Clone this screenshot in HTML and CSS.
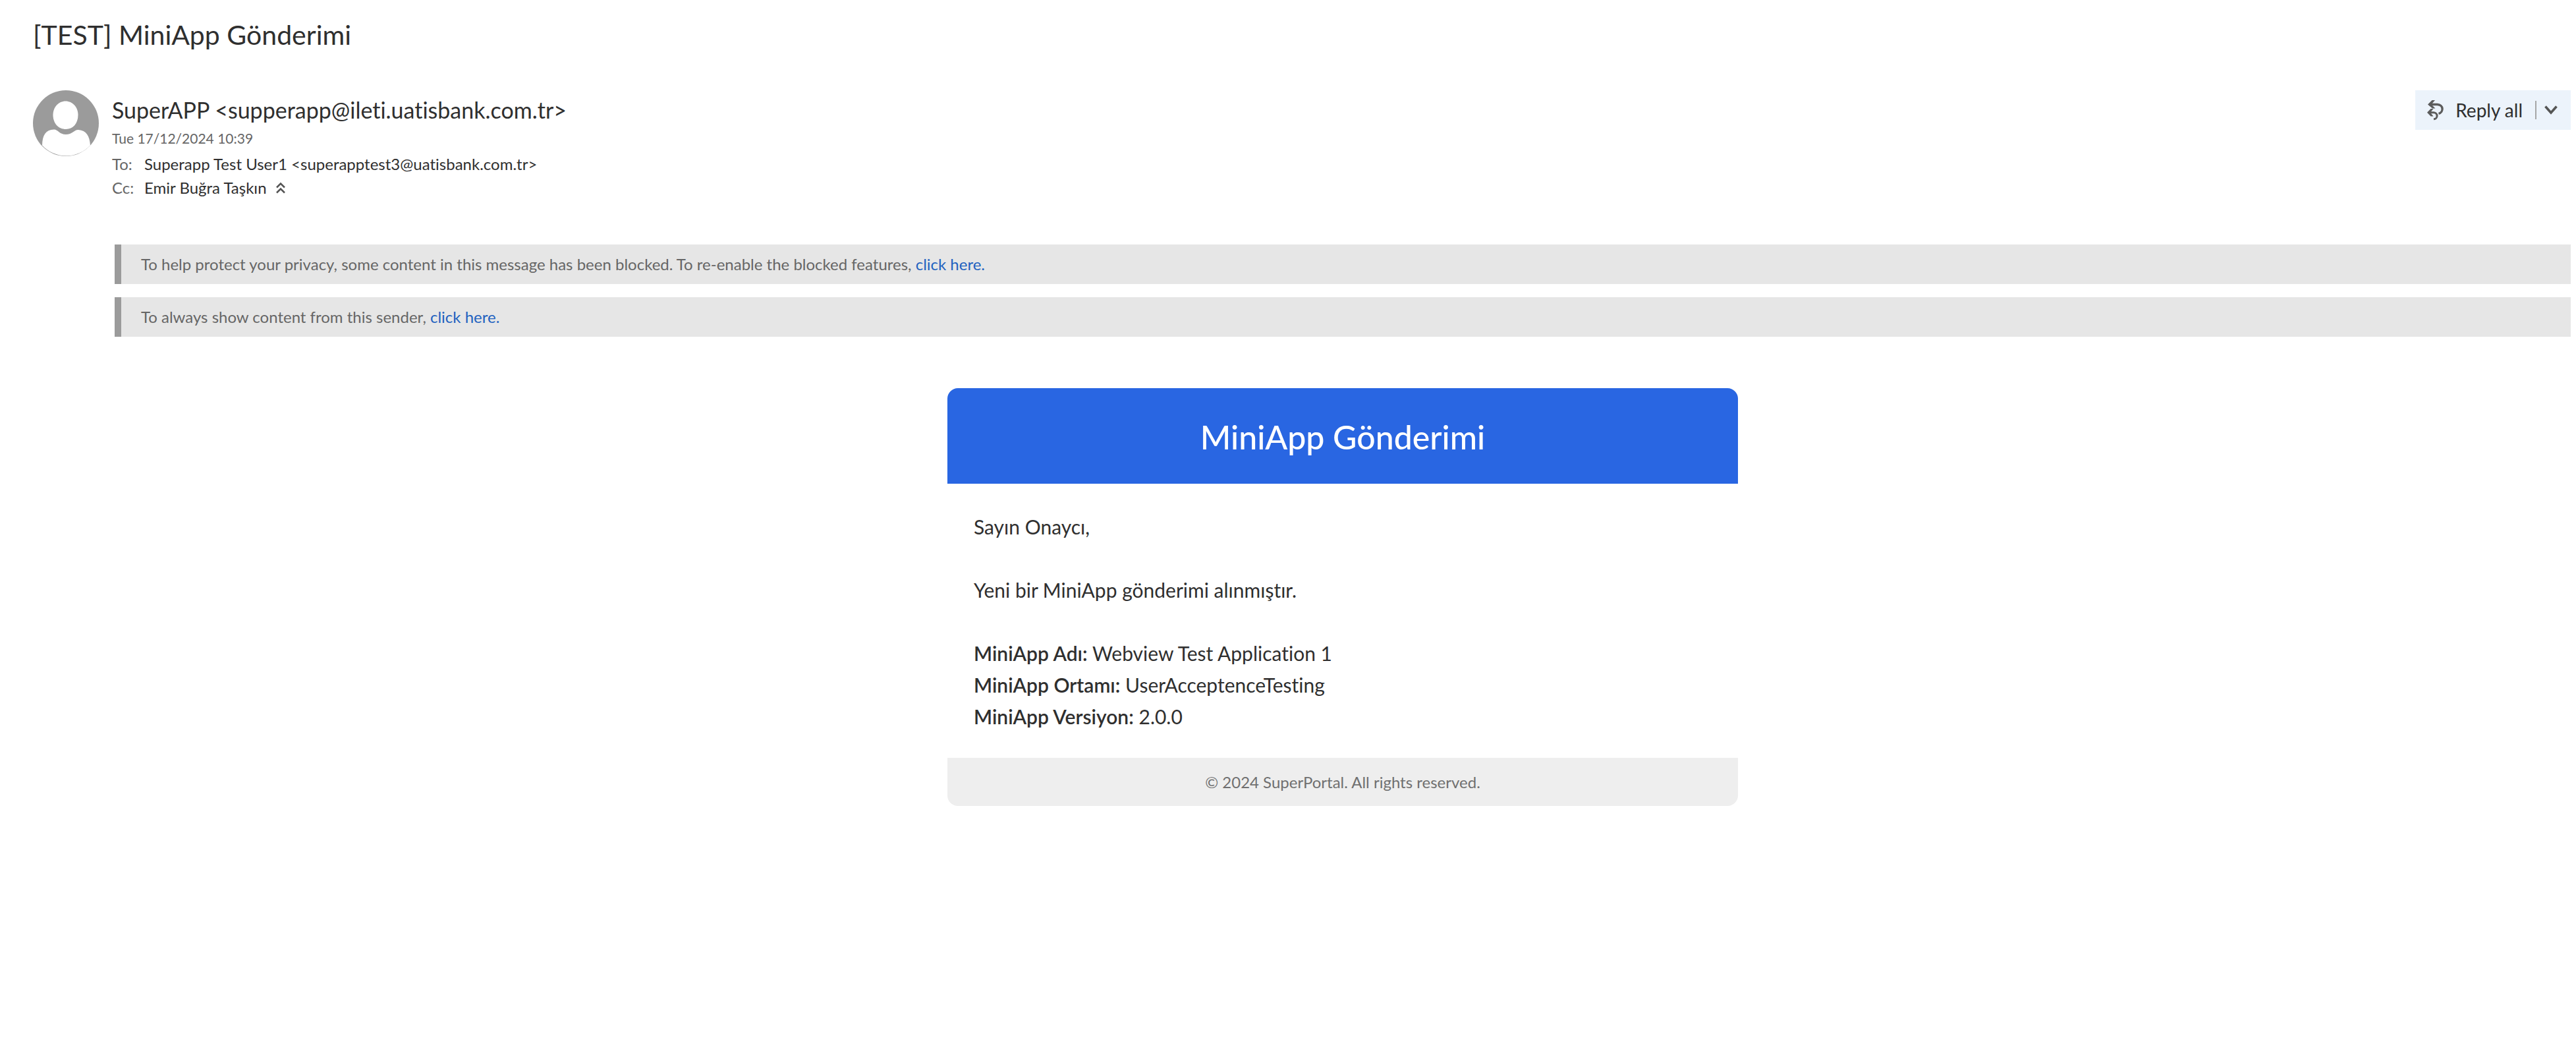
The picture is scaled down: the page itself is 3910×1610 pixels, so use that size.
FILE: index.html
```html
<!DOCTYPE html>
<html lang="en">
<head>
<meta charset="utf-8">
<title>[TEST] MiniApp Gönderimi</title>
<link rel="stylesheet" href="styles.css">
</head>
<body>
<main class="message">
  <h1 class="subject">[TEST] MiniApp Gönderimi</h1>

  <header class="envelope">
    <svg class="avatar" viewBox="0 0 100 100" aria-hidden="true">
      <circle cx="50" cy="50" r="50" fill="#9b9b9b"/>
      <path fill="#fff" d="M49.5 16.500C60 16.500 68.500 25.500 68.500 37.500C68.500 50.500 60.500 59 50 59C39 59 30.500 50.500 30.500 37.500C30.500 25.500 39 16.500 49.500 16.500Z"/>
      <path fill="#fff" d="M14 83.500C14.500 68 19 60 32 59.500C38 59.500 40 67 50 67C60 67 63 59.500 69 60C81 61 86 69 87 83.500A49.500 49.500 0 0 1 14 83.500Z"/>
    </svg>
    <div class="details">
      <h2 class="sender">SuperAPP &lt;supperapp@ileti.uatisbank.com.tr&gt;</h2>
      <time class="date" datetime="2024-12-17T10:39">Tue 17/12/2024 10:39</time>
      <dl class="recipients">
        <dt>To:</dt>
        <dd>Superapp Test User1 &lt;superapptest3@uatisbank.com.tr&gt;</dd>
        <dt>Cc:</dt>
        <dd>Emir Buğra Taşkın
          <button class="collapse" type="button" aria-label="Show less">
            <svg width="14" height="18" viewBox="0 0 14 18" fill="none" stroke="#555" stroke-width="2.500"><path d="M1 8.500 7 2.500l6 6M1 16.500l6-6 6 6"/></svg>
          </button>
        </dd>
      </dl>
    </div>
    <div class="reply">
      <button class="reply-all" type="button">
        <svg width="26" height="32" viewBox="0 0 26 32" fill="none" stroke="#5c5c5c" stroke-width="3.400">
          <path d="M3 7.500H15.500C25 8 25.500 19 17.500 21.500"/>
          <path stroke-width="3" d="M2 19.800H10C17 20.500 16.500 29.500 10 29.800"/>
          <path fill="#5c5c5c" stroke="none" d="M1 7.500 7.500 1H12L6.500 7.500 12.500 13.500H8Z"/>
          <path fill="#5c5c5c" stroke="none" d="M0 19.800 5.500 14H9.500L5 19.800 9.500 25.500H5.500Z"/>
        </svg>
        Reply all
      </button>
      <button class="reply-more" type="button" aria-label="More reply options">
        <svg width="20" height="16" viewBox="0 0 20 16" fill="none" stroke="#555" stroke-width="3.600"><path d="M1.500 2.500 10 12l8.500-9.500"/></svg>
      </button>
    </div>
  </header>

  <div class="content">
    <div class="notices">
      <p class="notice">To help protect your privacy, some content in this message has been blocked. To re-enable the blocked features, <a href="#">click here.</a></p>
      <p class="notice">To always show content from this sender, <a href="#">click here.</a></p>
    </div>

    <article class="card">
      <h2 class="card-title">MiniApp Gönderimi</h2>
      <div class="card-body">
        <p>Sayın Onaycı,</p>
        <p>Yeni bir MiniApp gönderimi alınmıştır.</p>
        <p>
          <strong>MiniApp Adı:</strong> Webview Test Application 1<br>
          <strong>MiniApp Ortamı:</strong> UserAcceptenceTesting<br>
          <strong>MiniApp Versiyon:</strong> 2.0.0
        </p>
      </div>
      <footer class="card-footer">© 2024 SuperPortal. All rights reserved.</footer>
    </article>
  </div>
</main>
</body>
</html>
```
FILE: styles.css
```css
* {
  box-sizing: border-box;
}

body {
  margin: 0;
  background: #fff;
  color: #2f2f2f;
  font-family: Lato, "Noto Sans", sans-serif;
  font-size: 24px;
  font-variant-ligatures: none;
}

h1, h2, p, dl, dd {
  margin: 0;
  font-weight: 400;
}

button {
  padding: 0;
  border: 0;
  background: none;
  color: inherit;
  font: inherit;
  cursor: pointer;
}

svg {
  flex: none;
}

.message {
  padding: 28px 8px 40px 50px;
}

.subject {
  font-size: 41px;
  line-height: 50px;
}

.envelope {
  display: flex;
  align-items: flex-start;
  gap: 20px;
  margin-top: 59px;
}

.avatar {
  width: 100px;
  height: 100px;
}

.details {
  flex: 1;
  padding-top: 8px;
}

.sender {
  font-size: 34px;
  line-height: 44px;
}

.date {
  display: block;
  color: #666;
  font-size: 21px;
  line-height: 42px;
}

.recipients {
  display: grid;
  grid-template-columns: 49px 1fr;
  line-height: 36px;
}

.recipients dt {
  color: #666;
}

.recipients dd {
  display: flex;
  align-items: center;
  gap: 14px;
}

.collapse {
  display: flex;
}

.reply {
  display: flex;
  height: 60px;
  background: #ecf3fb;
  font-size: 28px;
}

.reply-all {
  display: flex;
  align-items: center;
  gap: 17px;
  padding: 0 19px 0 18px;
}

.reply-more {
  display: flex;
  align-items: center;
  padding-right: 20px;
}

.reply-more::before {
  width: 2px;
  height: 28px;
  margin-right: 12px;
  background: #a6a6a6;
  content: "";
}

.content {
  margin: 68px 0 0 124px;
}

.notices {
  display: grid;
  gap: 20px;
}

.notice {
  padding: 0 30px;
  border-left: 10px solid #9b9b9b;
  background: #e6e6e6;
  color: #666;
  line-height: 60px;
}

.notice a {
  color: #1f62c0;
  text-decoration: none;
}

.card {
  max-width: 1200px;
  margin: 78px auto 0;
  overflow: hidden;
  border-radius: 16px;
}

.card-title {
  padding-top: 3px;
  background: #2966e2;
  color: #fff;
  font-size: 50px;
  font-weight: 500;
  line-height: 142px;
  text-align: center;
}

.card-body {
  display: grid;
  gap: 48px;
  padding: 41px 40px 39px;
  font-size: 30px;
  line-height: 48px;
}

.card-body strong {
  font-weight: 600;
}

.card-footer {
  background: #eee;
  color: #707070;
  line-height: 73px;
  text-align: center;
}
```
